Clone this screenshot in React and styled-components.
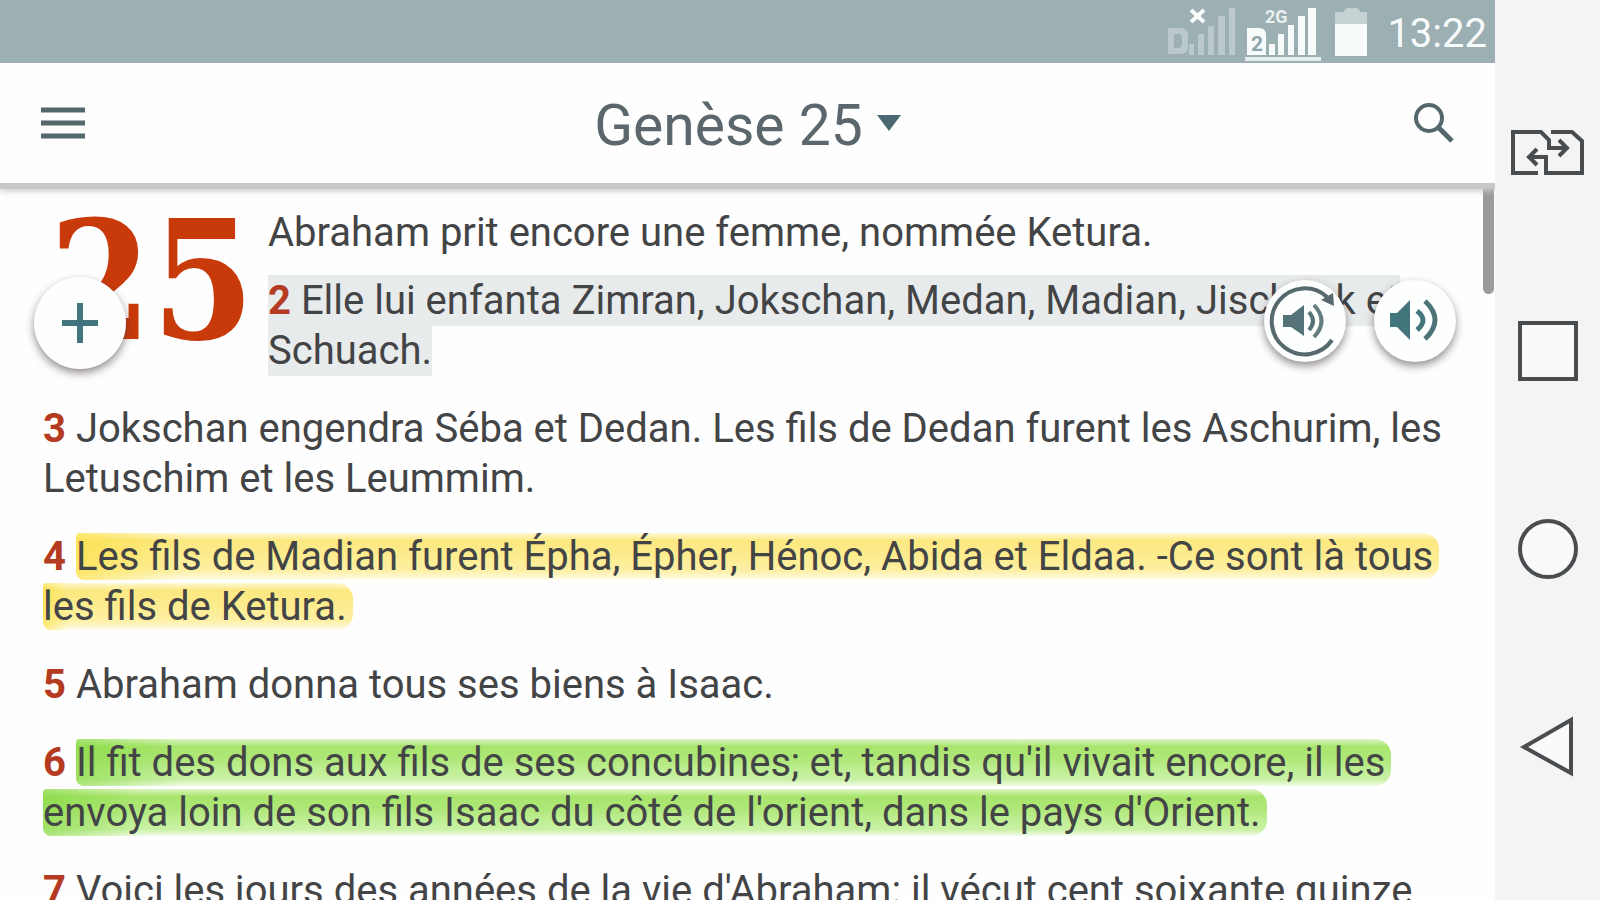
import React from "react";
import styled, { createGlobalStyle, css } from "styled-components";

const GlobalStyle = createGlobalStyle`
    * {
        box-sizing: border-box;
    }

    body {
        margin: 0;
        background: #fefefe;
        font-family: Roboto, "Liberation Sans", sans-serif;
        color: #434446;
    }

    p, h1 {
        margin: 0;
        font-weight: 400;
    }
`;

const Device = styled.div`
    display: flex;
    height: 100vh;
    overflow: hidden;
`;

const Screen = styled.div`
    flex: 1;
    min-width: 0;
    display: flex;
    flex-direction: column;
`;

const StatusBar = styled.div`
    flex: none;
    display: flex;
    align-items: center;
    justify-content: flex-end;
    height: 63px;
    padding: 0 8px;
    background: #9cafb3;
    color: #f8fbfb;

    svg {
        display: block;
    }
`;

const Clock = styled.time`
    padding: 4px 0 0 20px;
    font-size: 40px;
    line-height: 48px;
`;

const Header = styled.header`
    flex: none;
    position: relative;
    z-index: 1;
    display: grid;
    grid-template-columns: 1fr auto 1fr;
    align-items: center;
    height: 120px;
    padding: 0 40px;
    background: #fefefe;
    clip-path: inset(0 0 -20px 0);
    box-shadow: 0 6px 0 #c8c8c8, 0 8px 6px #c8c8c8;
`;

const IconButton = styled.button`
    display: flex;
    justify-self: ${(props) => props.$side || "center"};
    padding: 0;
    border: 0;
    background: none;
    color: #54686c;
    cursor: pointer;
`;

const ChapterButton = styled(IconButton)`
    align-items: center;
    gap: 14px;
    font-family: inherit;
    color: #5b676c;

    h1 {
        padding-top: 6px;
        font-size: 57px;
        line-height: 64px;
    }
`;

const Reader = styled.main`
    flex: 1;
    min-height: 0;
    position: relative;
    display: flex;
    flex-direction: column;
    gap: 28px;
    padding: 25px 40px 0 43px;
    overflow: hidden;
`;

const Opening = styled.section`
    display: flex;
`;

const ChapterNumber = styled.div`
    flex: none;
    width: 225px;
    height: 148px;
    padding-left: 6px;
    font-family: "DejaVu Serif Condensed", "DejaVu Serif", serif;
    font-size: 164px;
    font-weight: 700;
    line-height: 148px;
    color: #c93a0b;
`;

const OpeningVerses = styled.div`
    flex: 1;
    display: flex;
    flex-direction: column;
    gap: 18px;
`;

const Verse = styled.p`
    flex: none;
    font-size: 40px;
    line-height: 50px;
`;

const VerseNumber = styled.b`
    font-weight: 700;
    color: #b53a22;
`;

const markers = {
    grey: css`
        padding: 2px 0;
        background: #e8ebec;
    `,
    yellow: css`
        padding-right: 6px;
        border-radius: 4px 16px 16px 8px;
        background:
            linear-gradient(to right, rgba(252, 222, 60, 0.6), rgba(252, 222, 60, 0) 8%),
            linear-gradient(
                to bottom,
                rgba(255, 240, 150, 0.4) 0%,
                #fce880 16%,
                #fdec90 50%,
                #fdf0a4 80%,
                rgba(255, 248, 205, 0.4) 100%
            );
    `,
    green: css`
        padding-right: 6px;
        border-radius: 4px 16px 16px 8px;
        background:
            linear-gradient(to right, rgba(130, 215, 60, 0.6), rgba(130, 215, 60, 0) 8%),
            linear-gradient(
                to bottom,
                rgba(190, 236, 140, 0.5) 0%,
                #a8e56c 16%,
                #aee777 40%,
                #bfee94 66%,
                #c9f1a4 86%,
                rgba(222, 247, 196, 0.4) 100%
            );
    `,
};

const Marker = styled.mark`
    color: inherit;
    -webkit-box-decoration-break: clone;
    box-decoration-break: clone;
    ${(props) => markers[props.$tone]}
`;

const RoundButton = styled.button`
    display: flex;
    align-items: center;
    justify-content: center;
    width: ${(props) => props.$size}px;
    height: ${(props) => props.$size}px;
    padding: 0;
    border: 0;
    border-radius: 50%;
    background: #fdfefe;
    box-shadow: 0 4px 8px rgba(60, 50, 50, 0.55);
    color: #42757c;
    cursor: pointer;
`;

/* floating buttons sit over the text */
const AddSlot = styled.div`
    position: absolute;
    top: 94px;
    left: 34px;
`;

const AudioSlot = styled.div`
    position: absolute;
    top: 97px;
    right: 39px;
    display: flex;
    gap: 28px;
`;

const ScrollThumb = styled.div`
    position: absolute;
    top: 4px;
    right: 1px;
    width: 11px;
    height: 107px;
    border-radius: 0 0 6px 6px;
    background: #9b9b9b;
`;

const NavRail = styled.nav`
    flex: none;
    display: flex;
    flex-direction: column;
    align-items: center;
    justify-content: center;
    gap: 124px;
    width: 105px;
    background: #f4f4f4;

    button {
        color: #4a4d50;
    }
`;

function SignalIcons() {
    return (
        <svg width="202" height="63" viewBox="1165 0 202 63" fill="currentColor">
            <g opacity="0.35">
                <path fillRule="evenodd" d="M1168 28h12q8 0 8 8v10q0 8-8 8h-12zM1174 34v14h4q4 0 4-4v-6q0-4-4-4z" />
                <path d="M1189 44h5v11h-5zM1198 34h6v21h-6zM1208 26h6v29h-6zM1218 16h7v39h-7zM1229 8h6v47h-6z" />
            </g>
            <path d="M1191 10l13 12M1204 10l-13 12" stroke="currentColor" strokeWidth="4" />
            <path d="M1247 28h12q7 0 7 7v20h-19z" />
            <text x="1251" y="51" fontSize="21" fontWeight="700" fill="#8fa4a8">2</text>
            <path d="M1269 44h6v11h-6zM1278 34h6v21h-6zM1288 25h6v30h-6zM1298 16h7v39h-7zM1308 8h8v47h-8z" />
            <path d="M1245 57h76v4h-76z" opacity="0.8" />
            <text x="1265" y="23" fontSize="18" fontWeight="700" opacity="0.85">2G</text>
            <path d="M1335 24V12h8l4-4h10l4 4h6v12z" opacity="0.45" />
            <path d="M1335 24h32v32h-32z" />
        </svg>
    );
}

function MenuIcon() {
    return (
        <svg width="46" height="34" viewBox="0 0 46 34">
            <path d="M1 4h44M1 17h44M1 30h44" stroke="currentColor" strokeWidth="5" />
        </svg>
    );
}

function SearchIcon() {
    return (
        <svg width="42" height="42" viewBox="0 0 42 42" fill="none" stroke="currentColor">
            <circle cx="16" cy="16" r="13" strokeWidth="4" />
            <path d="M25 25l14 14" strokeWidth="5" />
        </svg>
    );
}

function SpeakerIcon() {
    return (
        <svg width="82" height="82" viewBox="0 0 82 82" fill="none">
            <path d="M16 33h7l13-13v40L23 47h-7z" fill="#42757c" />
            <path d="M43 31q12 9 0 19" stroke="#42757c" strokeWidth="5" />
            <path d="M51 21q20 19 0 38" stroke="#4e7379" strokeWidth="5" />
        </svg>
    );
}

function RepeatSpeakerIcon() {
    return (
        <svg width="82" height="82" viewBox="0 0 82 82" fill="none">
            <path d="M68 60A33 33 0 1 1 63 17" stroke="#56696c" strokeWidth="4" />
            <path d="M57 20l12-7 1 13z" fill="#56696c" />
            <path d="M19 35h8l13-10v31L27 47h-8z" fill="#547277" />
            <path d="M45 32q8 9 0 18" stroke="#547277" strokeWidth="4" />
            <path d="M50 25q15 16 0 32" stroke="#647d81" strokeWidth="4" />
        </svg>
    );
}

function NavIcon({ children }) {
    return (
        <svg width="74" height="74" viewBox="0 0 74 74" fill="none" stroke="currentColor" strokeWidth="4">
            {children}
        </svg>
    );
}

function App() {
    return (
        <Device>
            <GlobalStyle />
            <Screen>
                <StatusBar>
                    <SignalIcons />
                    <Clock>13:22</Clock>
                </StatusBar>
                <Header>
                    <IconButton $side="start" aria-label="Menu">
                        <MenuIcon />
                    </IconButton>
                    <ChapterButton>
                        <h1>Genèse 25</h1>
                        <svg width="24" height="16" viewBox="0 0 24 16">
                            <path d="M0 0h24L12 16z" fill="#4c6973" />
                        </svg>
                    </ChapterButton>
                    <IconButton $side="end" aria-label="Rechercher">
                        <SearchIcon />
                    </IconButton>
                </Header>
                <Reader>
                    <Opening>
                        <ChapterNumber>25</ChapterNumber>
                        <OpeningVerses>
                            <Verse>Abraham prit encore une femme, nommée Ketura.</Verse>
                            <Verse>
                                <Marker $tone="grey">
                                    <VerseNumber>2</VerseNumber> Elle lui enfanta Zimran, Jokschan, Medan, Madian, Jischbak et Schuach.
                                </Marker>
                            </Verse>
                        </OpeningVerses>
                    </Opening>
                    <Verse>
                        <VerseNumber>3</VerseNumber> Jokschan engendra Séba et Dedan. Les fils de Dedan furent les Aschurim, les Letuschim et les Leummim.
                    </Verse>
                    <Verse>
                        <VerseNumber>4</VerseNumber>{" "}
                        <Marker $tone="yellow">
                            Les fils de Madian furent Épha, Épher, Hénoc, Abida et Eldaa. -Ce sont là tous les fils de Ketura.
                        </Marker>
                    </Verse>
                    <Verse>
                        <VerseNumber>5</VerseNumber> Abraham donna tous ses biens à Isaac.
                    </Verse>
                    <Verse>
                        <VerseNumber>6</VerseNumber>{" "}
                        <Marker $tone="green">
                            Il fit des dons aux fils de ses concubines; et, tandis qu'il vivait encore, il les envoya loin de son fils Isaac du côté de l'orient, dans le pays d'Orient.
                        </Marker>
                    </Verse>
                    <Verse>
                        <VerseNumber>7</VerseNumber> Voici les jours des années de la vie d'Abraham: il vécut cent soixante quinze
                    </Verse>
                    <AddSlot>
                        <RoundButton $size={92} aria-label="Ajouter">
                            <svg width="36" height="40" viewBox="0 0 36 40">
                                <path d="M0 20h36M18 0v40" stroke="currentColor" strokeWidth="6" />
                            </svg>
                        </RoundButton>
                    </AddSlot>
                    <AudioSlot>
                        <RoundButton $size={82} aria-label="Lecture continue">
                            <RepeatSpeakerIcon />
                        </RoundButton>
                        <RoundButton $size={82} aria-label="Lecture">
                            <SpeakerIcon />
                        </RoundButton>
                    </AudioSlot>
                    <ScrollThumb />
                </Reader>
            </Screen>
            <NavRail>
                <IconButton aria-label="Changer">
                    <NavIcon>
                        <path d="M27 57H2V16h28l8 8v8h17M48 24l8 8-8 8" />
                        <path d="M40 16h21l10 9v32H35V41H18M26 33l-8 8 8 8" />
                    </NavIcon>
                </IconButton>
                <IconButton aria-label="Applications">
                    <NavIcon>
                        <path d="M9 9h56v56H9z" fill="#fafafa" />
                    </NavIcon>
                </IconButton>
                <IconButton aria-label="Accueil">
                    <NavIcon>
                        <circle cx="37" cy="37" r="28" fill="#fafafa" />
                    </NavIcon>
                </IconButton>
                <IconButton aria-label="Retour">
                    <NavIcon>
                        <path d="M60 10v53L13 37z" fill="#fafafa" />
                    </NavIcon>
                </IconButton>
            </NavRail>
        </Device>
    );
}

export default App;
